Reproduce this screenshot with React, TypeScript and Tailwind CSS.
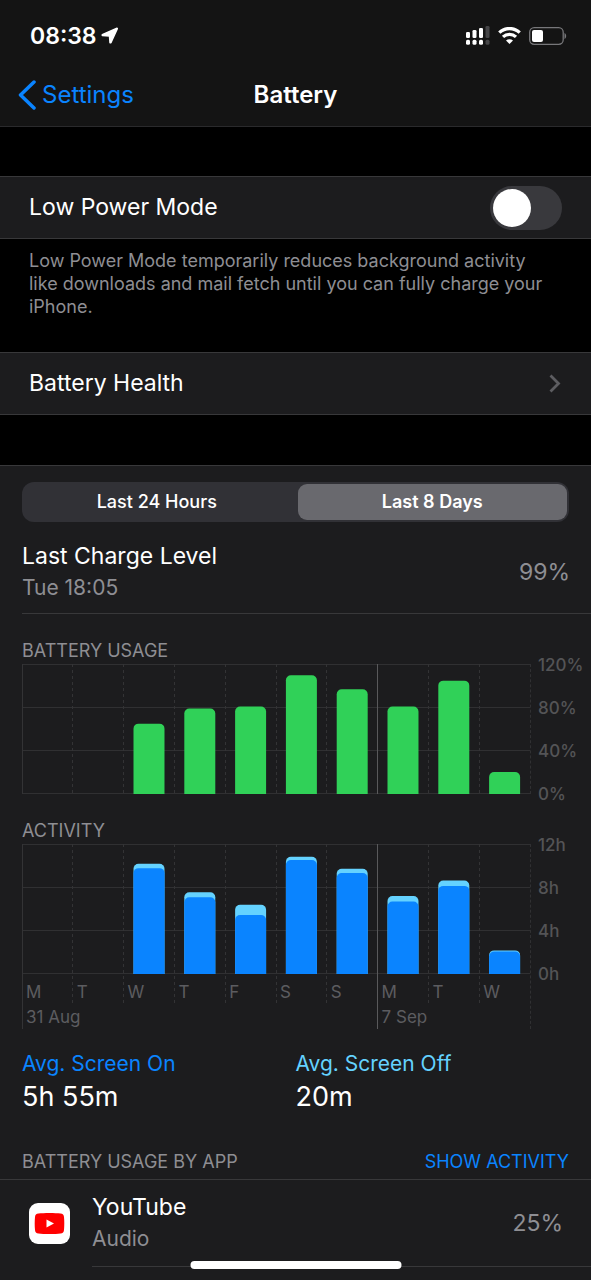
import React, { useState } from 'react';

interface UsageDay {
  label: string;
  week?: string;
  battery: number;
  screenOn: number;
  total: number;
}

const days: UsageDay[] = [
  { label: 'M', week: '31 Aug', battery: 0, screenOn: 0, total: 0 },
  { label: 'T', battery: 0, screenOn: 0, total: 0 },
  { label: 'W', battery: 65, screenOn: 9.8, total: 10.2 },
  { label: 'T', battery: 79, screenOn: 7.1, total: 7.55 },
  { label: 'F', battery: 81, screenOn: 5.45, total: 6.4 },
  { label: 'S', battery: 110, screenOn: 10.55, total: 10.85 },
  { label: 'S', battery: 97, screenOn: 9.35, total: 9.75 },
  { label: 'M', week: '7 Sep', battery: 81, screenOn: 6.7, total: 7.2 },
  { label: 'T', battery: 105, screenOn: 8.15, total: 8.65 },
  { label: 'W', battery: 20, screenOn: 2.05, total: 2.15 },
];

const PLOT_HEIGHT = 129;

interface Series {
  color: string;
  values: number[];
}

interface BarChartProps {
  title: string;
  max: number;
  ticks: string[];
  series: Series[];
  showDays?: boolean;
}

const BarChart: React.FC<BarChartProps> = ({ title, max, ticks, series, showDays }) => (
  <section className="pl-[22px] pt-6">
    <h2 className="text-lg leading-[26px] text-[#8e8e93]">{title}</h2>
    <div className="flex">
      <div className="min-w-0 flex-1">
        <div className="-mr-px border-r border-dashed border-[#303032]">
          <svg className={`block w-full ${showDays ? 'h-[185px]' : 'h-[130px]'}`} role="img" aria-label={title}>
            {[0, 43, 86, 129].map((y) => (
              <line key={y} x1="0" x2="100%" y1={y + 0.5} y2={y + 0.5} stroke="#303032" />
            ))}
            {/* day lines continue under the plot when the labels are shown */}
            {days.map((day, i) => (
              <line
                key={i}
                x1={`${i * 10}%`}
                x2={`${i * 10}%`}
                y1="0"
                y2={!showDays ? 130 : day.week ? 185 : 160}
                stroke={i === 7 ? '#59595b' : '#333335'}
                strokeDasharray={day.week ? undefined : '3 3'}
                shapeRendering="crispEdges"
              />
            ))}
            {/* bars run past the bottom edge so only the top corners look rounded */}
            <svg width="100%" height="130">
              {series.map((s) =>
                s.values.map((value, i) => {
                  const height = (value / max) * PLOT_HEIGHT;
                  return value > 0 ? (
                    <rect
                      key={`${s.color}-${i}`}
                      x={`${i * 10 + 1.95}%`}
                      y={PLOT_HEIGHT + 0.5 - height}
                      width="6.1%"
                      height={height + 10}
                      rx="5"
                      fill={s.color}
                    />
                  ) : null;
                })
              )}
            </svg>
          </svg>
        </div>
        {showDays && (
          <div className="-mt-[55px] grid h-[55px] grid-cols-10 pt-[5px] text-[17px] text-[#5c5c60]">
            {days.map((day, i) => (
              <div key={i} className="whitespace-nowrap pl-1">
                <div className="leading-[26px]">{day.label}</div>
                {day.week && <div className="leading-6">{day.week}</div>}
              </div>
            ))}
          </div>
        )}
      </div>
      <div className="-mb-2.5 -mt-[9px] flex h-[149px] w-[61px] flex-col justify-between pl-2 text-[17px] font-medium leading-5 text-[#545456]">
        {ticks.map((tick) => (
          <span key={tick}>{tick}</span>
        ))}
      </div>
    </div>
  </section>
);

const StatusBar = () => (
  <div className="flex h-[71px] items-center justify-between pl-[30px] pr-6">
    <div className="flex items-center gap-1">
      <span className="text-[23px] font-semibold leading-7">08:38</span>
      <svg width="17" height="17" viewBox="0 0 17 17" fill="#fff" stroke="#fff" strokeWidth="1.500" strokeLinejoin="round" aria-hidden="true">
        <path d="M16 1.300 1.300 7.600v1l7.200.3.500 6.900h.9L16.300 1.600Z" />
      </svg>
    </div>
    <div className="flex items-center gap-2">
      <svg width="24" height="20" viewBox="0 0 24 20" fill="#fff" aria-hidden="true">
        <rect x="0" y="6" width="4" height="6" rx="1.300" />
        <rect x="6.500" y="4" width="4" height="8" rx="1.300" />
        <rect x="13" y="2" width="4" height="10" rx="1.300" />
        <rect x="19.500" y="0" width="4" height="12" rx="1.300" fill="#454547" />
        <rect x="0" y="13.700" width="4" height="5" rx="1.500" />
        <rect x="6.500" y="13.700" width="4" height="5" rx="1.500" />
        <rect x="13" y="13.700" width="4" height="5" rx="1.500" />
        <rect x="19.500" y="13.700" width="4" height="5" rx="1.500" fill="#454547" />
      </svg>
      <svg width="23" height="17" viewBox="0 0 23 17" fill="none" stroke="#fff" aria-hidden="true">
        <path d="M1.300 5.600a14.800 14.800 0 0 1 20.400 0" strokeWidth="3.300" />
        <path d="M5 9.900a9.400 9.400 0 0 1 13 0" strokeWidth="3.200" />
        <path d="M11.500 17 8 13.600a5 5 0 0 1 7 0Z" fill="#fff" stroke="none" />
      </svg>
      <svg width="38" height="18" viewBox="0 0 38 18" aria-hidden="true">
        <rect x=".7" y=".7" width="33.500" height="16.600" rx="4.500" fill="none" stroke="#77777a" strokeWidth="1.300" />
        <rect x="3" y="3" width="11" height="12" rx="2" fill="#fff" />
        <path d="M35.500 6v6c2.200-.7 2.200-5.300 0-6Z" fill="#77777a" />
      </svg>
    </div>
  </div>
);

export default function App() {
  const [lowPower, setLowPower] = useState(false);
  const [range, setRange] = useState('Last 8 Days');

  return (
    <div className="min-h-screen bg-[#1c1c1e] font-['Inter',sans-serif] text-white">
      <header className="border-b border-[#2a2a2c] bg-[#141414] pb-[7px]">
        <StatusBar />
        <nav className="grid h-12 grid-cols-3 items-center text-2xl">
          <a href="#settings" className="flex items-center gap-1.5 pl-[18px] text-[#0a84ff]">
            <svg width="18" height="30" viewBox="0 0 18 30" fill="none" stroke="currentColor" strokeWidth="3.500" strokeLinecap="round" strokeLinejoin="round" aria-hidden="true">
              <path d="M16 2 2.500 15 16 28" />
            </svg>
            Settings
          </a>
          <h1 className="text-center font-semibold">Battery</h1>
        </nav>
      </header>

      <main>
        <div className="bg-black pt-[49px]">
          <label className="flex h-[63px] items-center justify-between border-y border-[#38383a] bg-[#1c1c1e] px-[29px] text-[23px]">
            Low Power Mode
            <input
              type="checkbox"
              role="switch"
              checked={lowPower}
              onChange={(e) => setLowPower(e.target.checked)}
              className="peer sr-only"
            />
            <span className="flex h-11 w-[72px] rounded-full bg-[#39393d] p-[3px] peer-checked:justify-end peer-checked:bg-[#30d158]">
              <span className="size-[38px] rounded-full bg-white" />
            </span>
          </label>
          <p className="pb-[34px] pl-[29px] pr-10 pt-2.5 text-lg leading-[23px] text-[#8e8e93]">
            Low Power Mode temporarily reduces background activity like downloads and mail fetch until you can fully charge your iPhone.
          </p>
          <a
            href="#battery-health"
            className="flex h-[63px] items-center justify-between border-y border-[#38383a] bg-[#1c1c1e] pl-[29px] pr-[30px] text-[23px]"
          >
            Battery Health
            <svg width="12" height="19" viewBox="0 0 12 19" fill="none" stroke="#5d5d61" strokeWidth="2.800" aria-hidden="true">
              <path d="m1.500 1.500 8 8-8 8" />
            </svg>
          </a>
          <div className="h-[50px]" />
        </div>

        <div className="border-t border-[#38383a] pt-4">
          <div className="mx-[22px] grid h-10 grid-cols-2 gap-1.5 rounded-xl bg-[#313136] py-0.5 pr-0.5 text-lg font-medium">
            {['Last 24 Hours', 'Last 8 Days'].map((name) => (
              <button
                key={name}
                type="button"
                aria-pressed={range === name}
                onClick={() => setRange(name)}
                className={`rounded-[9px] ${range === name ? 'bg-[#69696e] font-semibold' : ''}`}
              >
                {name}
              </button>
            ))}
          </div>

          <div className="ml-[22px] mt-[18px] flex items-center justify-between border-b border-[#38383a] pb-[9px] pr-[21px]">
            <div>
              <div className="text-[23px] leading-8">Last Charge Level</div>
              <div className="text-[21px] leading-8 text-[#8e8e93]">Tue 18:05</div>
            </div>
            <div className="text-[23px] text-[#8e8e93]">99%</div>
          </div>

          <BarChart
            title="BATTERY USAGE"
            max={120}
            ticks={['120%', '80%', '40%', '0%']}
            series={[{ color: '#30d158', values: days.map((d) => d.battery) }]}
          />
          <BarChart
            title="ACTIVITY"
            max={12}
            ticks={['12h', '8h', '4h', '0h']}
            series={[
              { color: '#64d2ff', values: days.map((d) => d.total) },
              { color: '#0a84ff', values: days.map((d) => d.screenOn) },
            ]}
            showDays
          />

          <div className="mt-[21px] grid grid-cols-2 px-[22px]">
            <div>
              <div className="text-[21px] leading-7 text-[#0a84ff]">Avg. Screen On</div>
              <div className="text-[27px] leading-[38px]">5h 55m</div>
            </div>
            <div>
              <div className="text-[21px] leading-7 text-[#64d2ff]">Avg. Screen Off</div>
              <div className="text-[27px] leading-[38px]">20m</div>
            </div>
          </div>

          <div className="mt-[33px] flex justify-between border-b border-[#38383a] px-[22px] pb-1 text-lg leading-[26px]">
            <h2 className="text-[#8e8e93]">BATTERY USAGE BY APP</h2>
            <button type="button" className="text-[#0a84ff]">SHOW ACTIVITY</button>
          </div>

          <div className="flex items-stretch gap-[22px] pl-[29px]">
            <svg className="self-center" width="41" height="41" viewBox="0 0 41 41" aria-hidden="true">
              <rect width="41" height="41" rx="9" fill="#fff" />
              <path d="M9.500 10.500c5-.7 17-.7 22 0 2.300.3 3.300 1.300 3.500 3.500.4 4 .4 9 0 13-.2 2.200-1.200 3.200-3.500 3.500-5 .7-17 .7-22 0C7.200 30.200 6.200 29.200 6 27c-.4-4-.4-9 0-13 .2-2.200 1.200-3.200 3.500-3.500Z" fill="#f00" />
              <path d="m17.500 16.500 7.500 4-7.500 4Z" fill="#fff" />
            </svg>
            <div className="flex flex-1 items-center justify-between border-b border-[#38383a] py-[11px] pr-7">
              <div>
                <div className="text-[23px] leading-8">YouTube</div>
                <div className="text-[21px] leading-8 text-[#8e8e93]">Audio</div>
              </div>
              <div className="text-[23px] text-[#8e8e93]">25%</div>
            </div>
          </div>
        </div>
      </main>

      <div className="fixed bottom-[11px] left-1/2 h-2 w-[211px] -translate-x-1/2 rounded-full bg-white" />
    </div>
  );
}
